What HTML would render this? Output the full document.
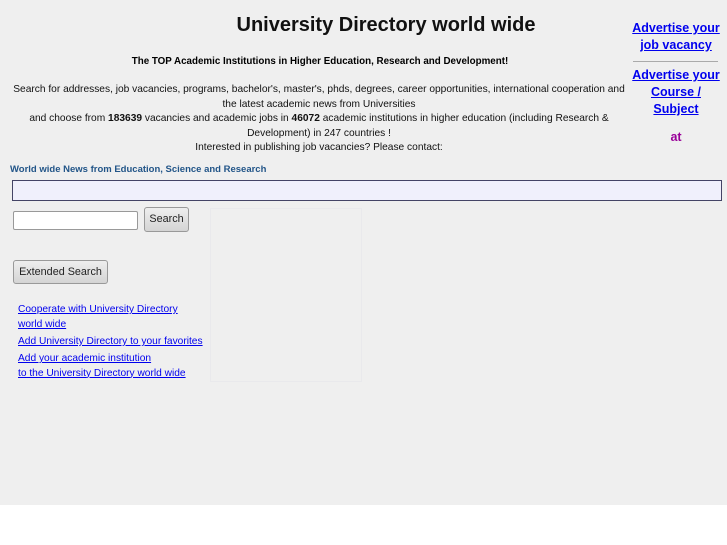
<!DOCTYPE html>
<html><head><style>
html,body{margin:0;padding:0;width:727px;height:545px;background:#fff;overflow:hidden;font-family:"Liberation Sans",Arial,sans-serif;}
#bg{position:absolute;left:0;top:0;width:727px;height:505px;background:#efefef;}
.a{position:absolute;}
a{color:#00e;text-decoration:underline;}
.c{text-align:center;}
</style></head><body>
<div id="bg"></div>
<div class="a c" style="left:186px;top:14px;width:400px;font-size:20px;font-weight:bold;color:#111;">University Directory world wide</div>
<div class="a c" style="left:10px;top:56px;width:620px;font-size:9.8px;font-weight:bold;color:#000;">The TOP Academic Institutions in Higher Education, Research and Development!</div>
<div class="a c" style="left:6px;top:83px;width:626px;font-size:10.2px;line-height:14.5px;color:#111;">Search for addresses, job vacancies, programs, bachelor's, master's, phds, degrees, career opportunities, international cooperation and the latest academic news from Universities<br>and choose from <b>183639</b> vacancies and academic jobs in <b>46072</b> academic institutions in higher education (including Research &amp; Development) in 247 countries !<br>Interested in publishing job vacancies? Please contact:</div>
<div class="a c" style="left:630px;top:20px;width:92px;font-size:12.5px;font-weight:bold;line-height:17px;"><a href="#">Advertise your job vacancy</a></div>
<div class="a" style="left:633px;top:61px;width:85px;height:1px;background:#aaa;"></div>
<div class="a c" style="left:630px;top:67px;width:92px;font-size:12.5px;font-weight:bold;line-height:17px;"><a href="#">Advertise your Course / Subject</a></div>
<div class="a c" style="left:630px;top:130px;width:92px;font-size:12.5px;font-weight:bold;color:#909;">at</div>
<div class="a" style="left:10px;top:164px;font-size:9.5px;font-weight:bold;color:#225588;">World wide News from Education, Science and Research</div>
<div class="a" style="left:12px;top:180px;width:708px;height:19px;background:#f0f0fc;border:1px solid #446;"></div>
<div class="a" style="left:13px;top:211px;width:123px;height:17px;background:#fff;border:1px solid #999;border-radius:2px;"></div>
<div class="a c" style="left:144px;top:207px;width:43px;height:23px;line-height:23px;font-size:10.8px;color:#222;background:linear-gradient(#eee,#d4d4d4);border:1px solid #999;border-radius:3px;">Search</div>
<div class="a c" style="left:13px;top:260px;width:93px;height:22px;line-height:22px;font-size:10.8px;color:#222;background:linear-gradient(#eee,#d4d4d4);border:1px solid #999;border-radius:3px;">Extended Search</div>
<div class="a" style="left:210px;top:208px;width:150px;height:172px;border:1px solid #e9e9ec;"></div>
<div class="a" style="left:18px;top:303px;font-size:10.2px;line-height:14.5px;"><a href="#">Cooperate with University Directory<br>world wide</a></div>
<div class="a" style="left:18px;top:335px;font-size:10.2px;line-height:14.5px;"><a href="#">Add University Directory to your favorites</a></div>
<div class="a" style="left:18px;top:352px;font-size:10.2px;line-height:14.5px;"><a href="#">Add your academic institution<br>to the University Directory world wide</a></div>
</body></html>
